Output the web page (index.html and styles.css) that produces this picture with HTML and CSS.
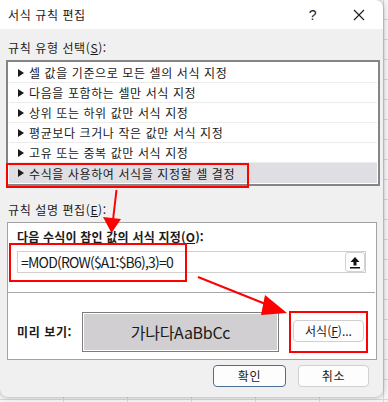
FILE: index.html
```html
<!DOCTYPE html>
<html lang="ko">
<head>
<meta charset="utf-8">
<link rel="stylesheet" href="styles.css">
</head>
<body>
<div class="dialog">
  <div class="titlebar">
    <span class="title">서식 규칙 편집</span>
    <span class="help">?</span>
    <svg class="close" width="12" height="12" viewBox="0 0 12 12"><path d="M1 1L11 11M11 1L1 11" stroke="#1a1a1a" stroke-width="1.1"/></svg>
  </div>
  <div class="content">
    <div class="label">규칙 유형 선택(<u>S</u>):</div>
    <div class="listbox">
      <div class="item"><span class="tri"></span>셀 값을 기준으로 모든 셀의 서식 지정</div>
      <div class="item"><span class="tri"></span>다음을 포함하는 셀만 서식 지정</div>
      <div class="item"><span class="tri"></span>상위 또는 하위 값만 서식 지정</div>
      <div class="item"><span class="tri"></span>평균보다 크거나 작은 값만 서식 지정</div>
      <div class="item"><span class="tri"></span>고유 또는 중복 값만 서식 지정</div>
      <div class="item selected"><span class="tri"></span>수식을 사용하여 서식을 지정할 셀 결정</div>
    </div>
    <div class="label label2">규칙 설명 편집(<u>E</u>):</div>
    <div class="panel">
      <div class="bold-label">다음 수식이 참인 값의 서식 지정(<u>O</u>):</div>
      <div class="input">
        <span class="formula">=MOD(ROW($A1:$B6),3)=0</span>
        <span class="refbtn"><svg width="12" height="13" viewBox="0 0 12 13"><path d="M6 1L10.5 6H7.5V9.5H4.5V6H1.5Z" fill="#111"/><rect x="1" y="11" width="10" height="1.5" fill="#111"/></svg></span>
      </div>
      <div class="sep"></div>
      <div class="preview-row">
        <span class="bold-label">미리 보기:</span>
        <div class="preview"><div class="preview-inner">가나다AaBbCc</div></div>
        <button class="btn fmt">서식(<u>F</u>)...</button>
      </div>
    </div>
    <div class="buttons">
      <button class="btn ok">확인</button>
      <button class="btn cancel">취소</button>
    </div>
  </div>
</div>
<svg class="annot" width="388" height="402" viewBox="0 0 388 402">
  <rect x="7" y="164" width="241" height="23" fill="none" stroke="#f00" stroke-width="2"/>
  <rect x="10" y="244" width="176" height="37" fill="none" stroke="#f00" stroke-width="2"/>
  <rect x="290" y="312" width="77" height="40" fill="none" stroke="#f00" stroke-width="2"/>
  <line x1="116.5" y1="190" x2="113" y2="220" stroke="#f00" stroke-width="2"/>
  <path d="M103 217L121 219L111.5 233Z" fill="#f00"/>
  <line x1="198" y1="277" x2="268" y2="305" stroke="#f00" stroke-width="2"/>
  <path d="M265 295L287 313L261 315Z" fill="#f00"/>
</svg>
</body>
</html>
```
FILE: styles.css
```css
html, body {
  margin: 0;
  padding: 0;
}
body {
  width: 388px;
  height: 402px;
  position: relative;
  overflow: hidden;
  font-family: "Noto Sans CJK KR", "Noto Sans", sans-serif;
  font-size: 12px;
  letter-spacing: 0.6px;
  color: #1a1a1a;
  background-color: #f4f4f4;
  background-image:
    repeating-linear-gradient(to bottom, transparent 0, transparent 19px, #d6d6d6 19px, #d6d6d6 20px),
    repeating-linear-gradient(to right, transparent 0, transparent 63px, #d6d6d6 63px, #d6d6d6 64px);
}
.dialog {
  width: 383px;
  height: 397px;
  background: #f0f0f0;
  border-radius: 0 8px 8px 8px;
  box-shadow: 0 0 5px rgba(0, 0, 0, 0.35);
  overflow: hidden;
  display: flex;
  flex-direction: column;
}
.titlebar {
  height: 29px;
  background: #ffffff;
  display: flex;
  align-items: center;
  flex-shrink: 0;
}
.title {
  margin-left: 8px;
  font-size: 12px;
  line-height: 20px;
  flex: 1;
}
.help {
  font-family: "Liberation Sans", sans-serif;
  font-size: 14px;
  width: 12px;
  text-align: center;
  margin-right: 34px;
}
.close {
  margin-right: 18px;
}
.content {
  display: flex;
  flex-direction: column;
}
.label {
  margin: 9px 0 0 8px;
  line-height: 20px;
  height: 20px;
}
.label2 {
  margin-top: 14px;
}
u {
  text-decoration: underline;
  text-underline-offset: 1px;
}
.listbox {
  margin: 2px 0 0 6px;
  width: 368px;
  height: 120px;
  border: 2px solid #858585;
  background: #ffffff;
  padding: 1px;
  box-sizing: content-box;
  display: flex;
  flex-direction: column;
}
.item {
  height: 20px;
  line-height: 19px;
  box-sizing: border-box;
  border-bottom: 1px solid #ececec;
  display: flex;
  align-items: center;
  padding-left: 9px;
  white-space: nowrap;
}
.item.selected {
  background: #dedee3;
  border-bottom: none;
}
.tri {
  width: 0;
  height: 0;
  border-top: 4px solid transparent;
  border-bottom: 4px solid transparent;
  border-left: 6px solid #1a1a1a;
  margin-right: 5px;
}
.panel {
  margin: 2px 0 0 7px;
  width: 370px;
  height: 138px;
  box-sizing: border-box;
  border: 1px solid #a3a3a3;
  background: #ffffff;
  display: flex;
  flex-direction: column;
}
.bold-label {
  font-weight: bold;
  line-height: 20px;
  letter-spacing: 0.2px;
}
.panel > .bold-label {
  margin: 4px 0 0 9px;
}
.input {
  margin: 4px 0 0 9px;
  width: 349px;
  height: 22px;
  box-sizing: border-box;
  border: 1px solid #cfcfcf;
  display: flex;
  align-items: center;
  justify-content: space-between;
}
.formula {
  font-size: 14px;
  letter-spacing: -0.8px;
  margin-left: 3px;
  line-height: 20px;
}
.refbtn {
  width: 20px;
  height: 20px;
  box-sizing: border-box;
  border: 1px solid #d2d2d2;
  border-radius: 3px;
  display: flex;
  align-items: center;
  justify-content: center;
  background: #fdfdfd;
}
.sep {
  margin-top: 19px;
  height: 1px;
  background: #a8a8a8;
  margin-right: 1px;
}
.preview-row {
  display: flex;
  align-items: center;
  margin-top: 19px;
  padding-left: 9px;
}
.preview-row .bold-label {
  width: 65px;
  letter-spacing: 0.6px;
}
.preview {
  width: 197px;
  height: 40px;
  box-sizing: border-box;
  border: 1px solid #7c7c7c;
  padding: 1px;
  background: #ffffff;
}
.preview-inner {
  height: 100%;
  background: #d1cfd1;
  display: flex;
  align-items: center;
  justify-content: center;
  font-size: 16px;
  letter-spacing: -0.3px;
}
.btn {
  font-family: "Noto Sans CJK KR", "Noto Sans", sans-serif;
  font-size: 12px;
  letter-spacing: 0.6px;
  color: #1a1a1a;
  background: #fdfdfd;
  border: 1px solid #d0d0d0;
  border-radius: 4px;
  height: 22px;
  padding: 0;
  line-height: 18px;
}
.fmt {
  width: 71px;
  margin-left: 14px;
  margin-top: -2px;
  letter-spacing: 0;
}
.buttons {
  display: flex;
  justify-content: flex-end;
  gap: 12px;
  margin: 5px 14px 0 0;
}
.ok {
  width: 73px;
  border-color: #4a6e96;
}
.cancel {
  width: 71px;
}
.annot {
  position: absolute;
  left: 0;
  top: 0;
}
```
